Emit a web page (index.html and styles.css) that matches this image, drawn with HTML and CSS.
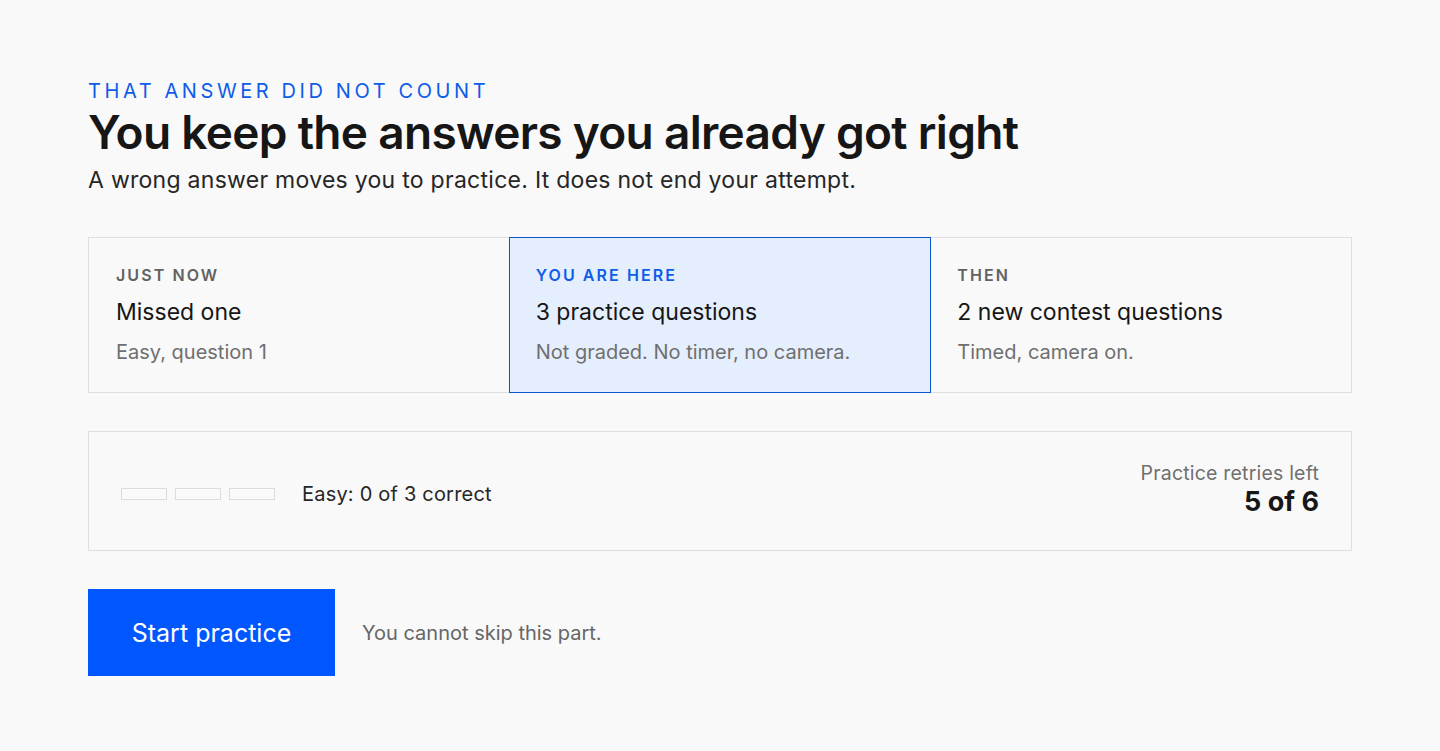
FILE: index.html
```html
<!DOCTYPE html>
<html lang="en">
<head>
  <meta charset="UTF-8">
  <meta name="viewport" content="width=device-width, initial-scale=1.0">
  <title>Practice round</title>
  <link rel="stylesheet" href="styles.css">
</head>
<body>
  <div class="page">
    <!-- Header -->
    <p class="eyebrow">That answer did not count</p>
    <h1>You keep the answers you already got right</h1>
    <p class="lead">A wrong answer moves you to practice. It does not end your attempt.</p>

    <!-- Steps -->
    <div class="steps">
      <div class="step">
        <div class="step-label">Just now</div>
        <div class="step-title">Missed one</div>
        <div class="step-note">Easy, question 1</div>
      </div>
      <div class="step current">
        <div class="step-label">You are here</div>
        <div class="step-title">3 practice questions</div>
        <div class="step-note">Not graded. No timer, no camera.</div>
      </div>
      <div class="step">
        <div class="step-label">Then</div>
        <div class="step-title">2 new contest questions</div>
        <div class="step-note">Timed, camera on.</div>
      </div>
    </div>

    <!-- Progress -->
    <div class="progress">
      <div class="progress-left">
        <div class="bars">
          <span class="bar"></span>
          <span class="bar"></span>
          <span class="bar"></span>
        </div>
        <span class="progress-text">Easy: 0 of 3 correct</span>
      </div>
      <div class="retries">
        <div class="retries-label">Practice retries left</div>
        <div class="retries-count">5 of 6</div>
      </div>
    </div>

    <!-- Action -->
    <div class="actions">
      <button class="start">Start practice</button>
      <span class="hint">You cannot skip this part.</span>
    </div>
  </div>
</body>
</html>
```

FILE: styles.css
```css
* {
  box-sizing: border-box;
}

body {
  margin: 0;
  font-family: Inter, "Noto Sans", sans-serif;
  background: #f9f9f9;
  color: #161616;
}

.page {
  padding: 78px 88px 0;
}

.eyebrow {
  margin: 0;
  font-size: 20px;
  line-height: 26px;
  letter-spacing: 0.18em;
  text-transform: uppercase;
  color: #0f5ce8;
}

h1 {
  margin: 0;
  font-size: 46px;
  line-height: 56px;
  font-weight: 600;
  letter-spacing: -0.015em;
  color: #161616;
}

.lead {
  margin: 5px 0 0;
  font-size: 23px;
  line-height: 30px;
  letter-spacing: 0.012em;
  color: #262626;
}

.steps {
  display: grid;
  grid-template-columns: repeat(3, 1fr);
  margin-top: 42px;
  border: 1px solid #dedede;
}

.step {
  padding: 26px 26px 26px;
  border: 1px solid transparent;
}

.step.current {
  background: #e5eefd;
  border-color: #0a55d0;
  margin: -1px -1px;
  padding: 27px 26px 27px;
}

.step-label {
  font-size: 16px;
  line-height: 20px;
  font-weight: 600;
  letter-spacing: 0.13em;
  text-transform: uppercase;
  color: #616161;
}

.current .step-label {
  color: #0f5ce8;
}

.step-title {
  margin-top: 13px;
  font-size: 23px;
  line-height: 28px;
  color: #161616;
}

.step-note {
  margin-top: 13px;
  font-size: 20px;
  line-height: 26px;
  color: #6f6f6f;
}

.progress {
  display: flex;
  align-items: center;
  justify-content: space-between;
  margin-top: 38px;
  height: 120px;
  padding: 0 32px;
  border: 1px solid #dedede;
}

.progress-left {
  display: flex;
  align-items: center;
  gap: 27px;
  margin-top: 6px;
}

.bars {
  display: flex;
  gap: 8px;
}

.bar {
  width: 46px;
  height: 12px;
  border: 1px solid #dcdcdc;
  background: #fafafa;
}

.progress-text {
  font-size: 20px;
  letter-spacing: 0.01em;
  color: #262626;
}

.retries {
  text-align: right;
  margin-top: -5px;
}

.retries-label {
  font-size: 19.5px;
  line-height: 26px;
  letter-spacing: 0.01em;
  color: #6f6f6f;
}

.retries-count {
  font-size: 27px;
  line-height: 32px;
  font-weight: 700;
  color: #161616;
}

.actions {
  display: flex;
  align-items: center;
  gap: 27px;
  margin-top: 38px;
}

.start {
  width: 247px;
  height: 87px;
  border: none;
  background: #0057ff;
  color: #fff;
  font-family: inherit;
  font-size: 25px;
  cursor: pointer;
}

.hint {
  font-size: 20px;
  color: #666;
}
```
